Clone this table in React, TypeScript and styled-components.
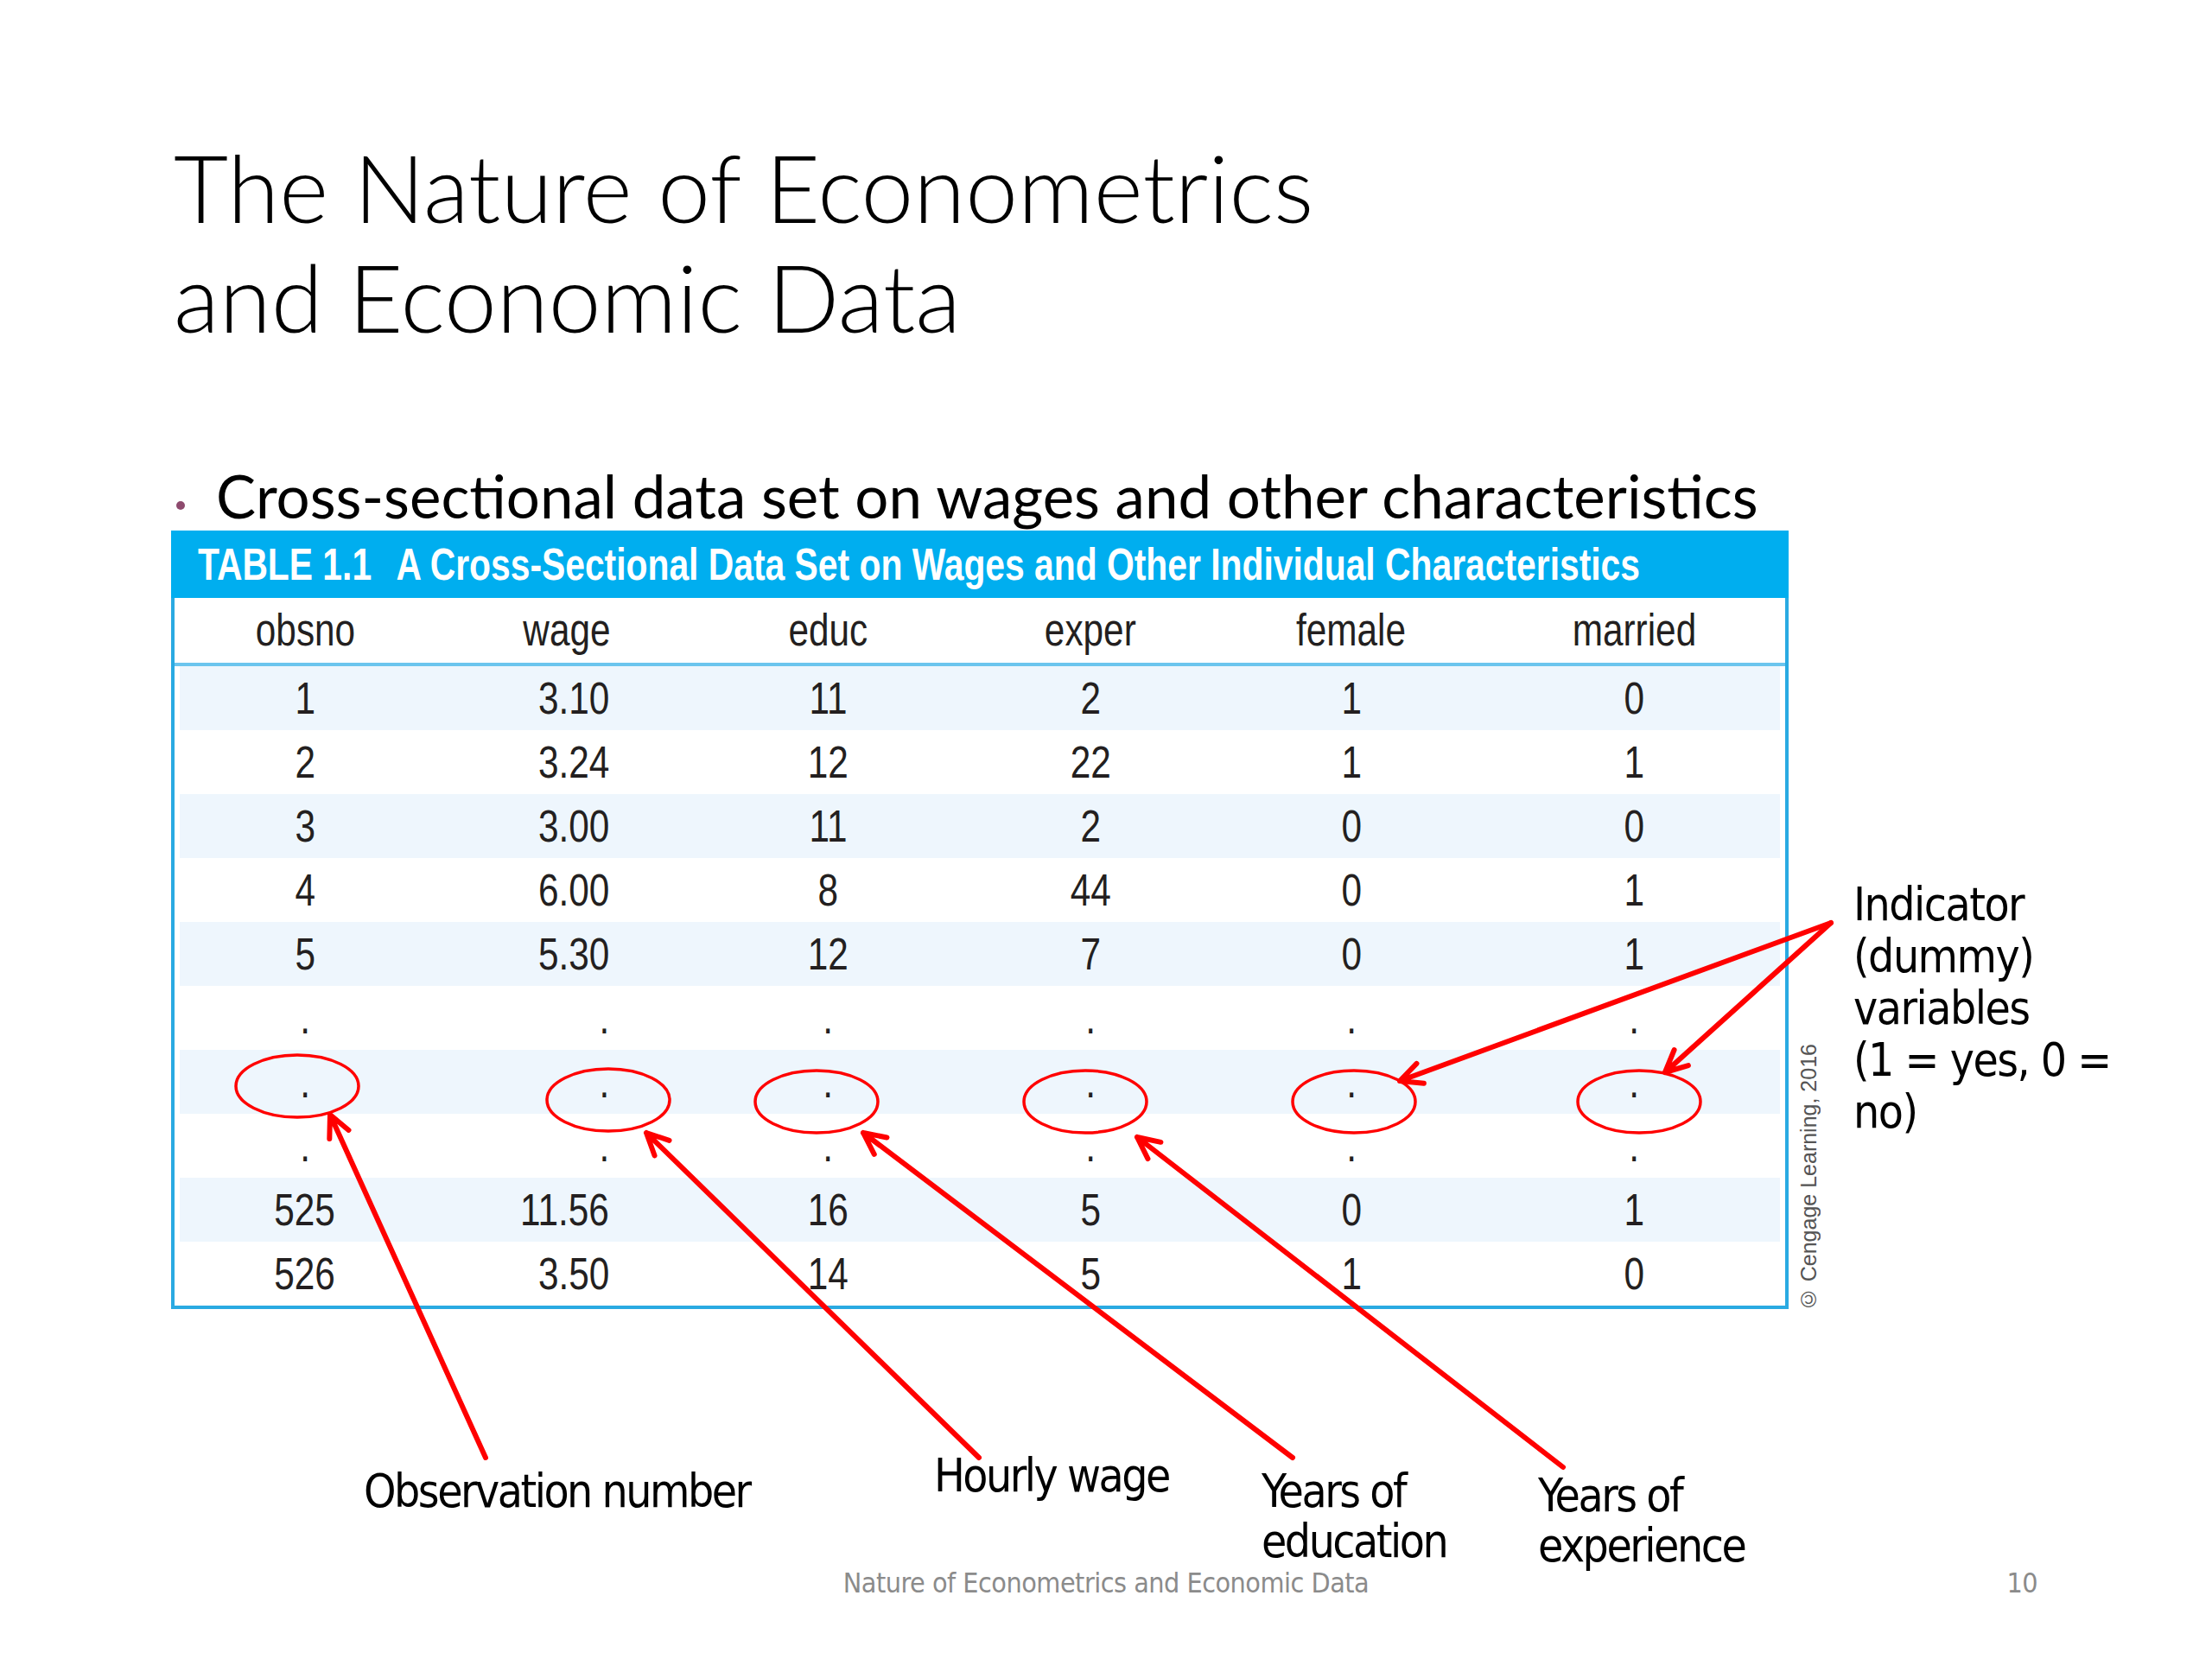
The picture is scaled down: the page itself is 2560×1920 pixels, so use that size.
import React from "react";
import styled, { createGlobalStyle } from "styled-components";

const GlobalStyle = createGlobalStyle`
  html, body { margin: 0; padding: 0; background: #ffffff; }
  #root { width: 2560px; }
`;

const helv = `"Liberation Sans", Arial, sans-serif`;
const tahoma = `"DejaVu Sans Condensed", "DejaVu Sans", sans-serif`;

const Slide = styled.div`
  position: relative;
  width: 2560px;
  height: 1920px;
  background: #ffffff;
  overflow: hidden;
  display: flex;
  flex-direction: column;
  align-items: flex-start;
`;

const Title = styled.h1`
  margin: 152px 0 0 201px;
  font-family: "Lato", "Open Sans", sans-serif;
  font-weight: 300;
  font-size: 109px;
  line-height: 127px;
  color: #000000;
`;

const BulletRow = styled.div`
  margin-top: 123px;
  padding-left: 204px;
  display: flex;
  align-items: flex-start;
  gap: 36px;
`;

const BulletDot = styled.span`
  width: 10px;
  height: 10px;
  margin-top: 51px;
  border-radius: 50%;
  background: #8e4a6e;
  flex: none;
`;

const BulletText = styled.span`
  font-family: "Lato", "Open Sans", sans-serif;
  font-size: 69px;
  line-height: 90px;
  color: #000000;
  white-space: nowrap;
`;

const MainRow = styled.div`
  margin-top: -5px;
  padding-left: 198px;
  display: flex;
  align-items: flex-start;
`;

const Table = styled.div`
  position: relative;
  z-index: 1;
  width: 1872px;
  box-sizing: border-box;
  background: #ffffff;
  border: 4px solid #2aaae2;
  border-top: none;
  font-family: ${helv};
  color: #231f20;
`;

const TitleBar = styled.div`
  height: 78px;
  margin: 0 -4px;
  padding-left: 31px;
  display: flex;
  align-items: center;
  background: #00aeef;
  color: #ffffff;
  font-weight: 700;
  font-size: 52px;
  white-space: nowrap;
`;

const BarText = styled.span`
  display: inline-block;
  transform: scaleX(0.785);
  transform-origin: left center;
`;

const BarCaption = styled.span`
  margin-left: 36px;
`;

const Grid = styled.div<{ $shade?: boolean; $header?: boolean }>`
  display: grid;
  grid-template-columns: 290px 316px 288px 320px 284px 1fr;
  align-items: center;
  height: ${(p) => (p.$header ? "75px" : "74px")};
  margin: 0 6px;
  background: ${(p) => (p.$shade ? "#eef6fd" : "#ffffff")};
  font-size: 51px;
  & > :nth-child(6) { padding-left: 16px; }
`;

const HeaderWrap = styled.div`
  border-bottom: 4px solid #6bc5ee;
`;

const Cell = styled.div<{ $right?: boolean }>`
  text-align: ${(p) => (p.$right ? "right" : "center")};
  padding-right: ${(p) => (p.$right ? "109px" : "0")};
  line-height: 1;
`;

const Squeeze = styled.span<{ $right?: boolean }>`
  display: inline-block;
  transform: scaleX(0.83);
  transform-origin: ${(p) => (p.$right ? "right" : "center")} center;
`;

const Credit = styled.div`
  align-self: flex-end;
  margin: 0 0 -3px 11px;
  writing-mode: vertical-rl;
  transform: rotate(180deg);
  font-family: ${helv};
  font-size: 25px;
  line-height: 24px;
  color: #555555;
  white-space: nowrap;
`;

const Note = styled.div`
  margin: 403px 0 0 40px;
  font-family: ${tahoma};
  font-size: 53px;
  line-height: 60px;
  letter-spacing: -1.5px;
  color: #000000;
  white-space: nowrap;
`;

const LabelRow = styled.div`
  margin-top: 164px;
  padding-left: 421px;
  display: grid;
  grid-template-columns: 660px 379px 320px auto;
  align-items: start;
`;

const Label = styled.div<{ $mt: number }>`
  margin-top: ${(p) => p.$mt}px;
  font-family: ${tahoma};
  font-size: 53px;
  line-height: 58px;
  letter-spacing: -2.5px;
  color: #000000;
  white-space: nowrap;
`;

const Footer = styled.div`
  margin-top: -6px;
  align-self: stretch;
  padding: 0 202px;
  display: grid;
  grid-template-columns: 1fr auto 1fr;
  font-family: ${tahoma};
  font-size: 32px;
  line-height: 40px;
  letter-spacing: -0.5px;
  color: #8b8b8b;
`;

const PageNo = styled.span`
  justify-self: end;
`;

const Overlay = styled.svg`
  position: absolute;
  left: 0;
  top: 0;
  z-index: 2;
  pointer-events: none;
`;

type Row = string[] | "dots";

const rows: Row[] = [
  ["1", "3.10", "11", "2", "1", "0"],
  ["2", "3.24", "12", "22", "1", "1"],
  ["3", "3.00", "11", "2", "0", "0"],
  ["4", "6.00", "8", "44", "0", "1"],
  ["5", "5.30", "12", "7", "0", "1"],
  "dots",
  "dots",
  "dots",
  ["525", "11.56", "16", "5", "0", "1"],
  ["526", "3.50", "14", "5", "1", "0"],
];

const headers = ["obsno", "wage", "educ", "exper", "female", "married"];

const ellipses = [
  { cx: 344, cy: 1257 },
  { cx: 704, cy: 1273 },
  { cx: 945, cy: 1275 },
  { cx: 1256, cy: 1275 },
  { cx: 1567, cy: 1275 },
  { cx: 1897, cy: 1275 },
];

const arrows = [
  [562, 1687, 382, 1290],
  [1133, 1687, 748, 1311],
  [1496, 1687, 999, 1311],
  [1809, 1698, 1316, 1316],
  [2119, 1068, 1620, 1251],
  [2119, 1068, 1927, 1241],
];

function arrowPath(x1: number, y1: number, x2: number, y2: number) {
  const len = 28;
  const ang = 0.45;
  const a = Math.atan2(y1 - y2, x1 - x2);
  const ax = x2 + len * Math.cos(a + ang);
  const ay = y2 + len * Math.sin(a + ang);
  const bx = x2 + len * Math.cos(a - ang);
  const by = y2 + len * Math.sin(a - ang);
  return `M${x1},${y1} L${x2},${y2} M${ax},${ay} L${x2},${y2} L${bx},${by}`;
}

export default function App() {
  return (
    <Slide>
      <GlobalStyle />
      <Title>
        The Nature of Econometrics
        <br />
        and Economic Data
      </Title>
      <BulletRow>
        <BulletDot />
        <BulletText>Cross-sectional data set on wages and other characteristics</BulletText>
      </BulletRow>
      <MainRow>
        <Table>
          <TitleBar>
            <BarText>
              TABLE 1.1<BarCaption>A Cross-Sectional Data Set on Wages and Other Individual Characteristics</BarCaption>
            </BarText>
          </TitleBar>
          <HeaderWrap>
            <Grid $header>
              {headers.map((h) => (
                <Cell key={h}>
                  <Squeeze>{h}</Squeeze>
                </Cell>
              ))}
            </Grid>
          </HeaderWrap>
          {rows.map((r, i) => (
            <Grid key={i} $shade={i % 2 === 0}>
              {(r === "dots" ? [".", ".", ".", ".", ".", "."] : r).map((v, j) => (
                <Cell key={j} $right={j === 1}>
                  <Squeeze $right={j === 1}>{v}</Squeeze>
                </Cell>
              ))}
            </Grid>
          ))}
        </Table>
        <Credit>© Cengage Learning, 2016</Credit>
        <Note>
          Indicator
          <br />
          (dummy)
          <br />
          variables
          <br />
          (1 = yes, 0 =
          <br />
          no)
        </Note>
      </MainRow>
      <LabelRow>
        <Label $mt={18}>Observation number</Label>
        <Label $mt={0}>Hourly wage</Label>
        <Label $mt={18}>
          Years of
          <br />
          education
        </Label>
        <Label $mt={23}>
          Years of
          <br />
          experience
        </Label>
      </LabelRow>
      <Footer>
        <span />
        <span>Nature of Econometrics and Economic Data</span>
        <PageNo>10</PageNo>
      </Footer>
      <Overlay width={2560} height={1920} viewBox="0 0 2560 1920">
        {ellipses.map((e, i) => (
          <ellipse key={i} cx={e.cx} cy={e.cy} rx={71} ry={36} fill="none" stroke="#ff0000" strokeWidth={3.5} />
        ))}
        {arrows.map((a, i) => (
          <path
            key={i}
            d={arrowPath(a[0], a[1], a[2], a[3])}
            fill="none"
            stroke="#ff0000"
            strokeWidth={6}
            strokeLinecap="round"
            strokeLinejoin="round"
          />
        ))}
      </Overlay>
    </Slide>
  );
}
